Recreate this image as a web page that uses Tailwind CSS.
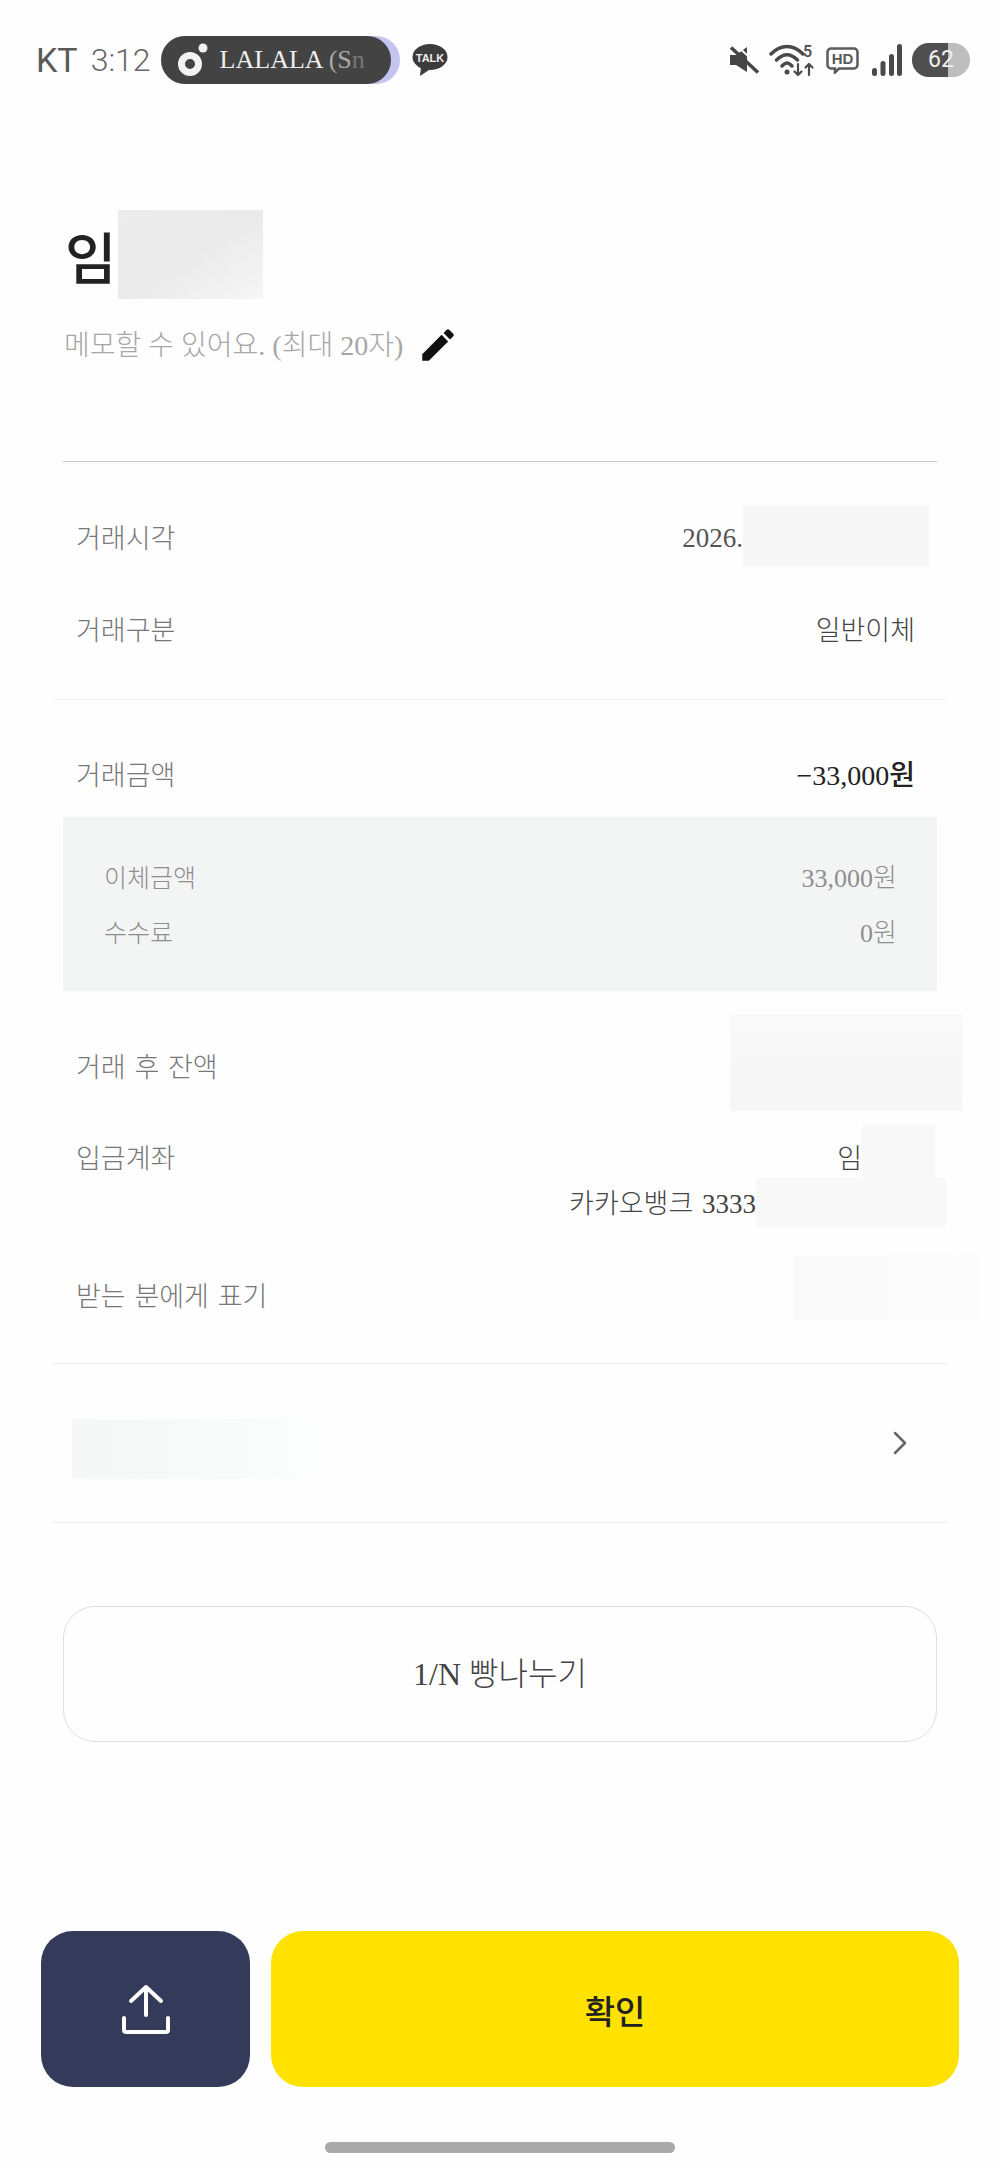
<!doctype html>
<html lang="ko">
<head>
<meta charset="utf-8">
<script src="https://cdn.jsdelivr.net/npm/@tailwindcss/browser@4"></script>
</head>
<body class="m-0">
<div class="relative w-[1000px] h-[2168px] overflow-hidden bg-[#fefefe] font-['Liberation_Serif','Noto_Sans_CJK_KR',serif] font-light text-[#555]">

  <!-- status bar -->
  <div class="h-[120px] flex items-center justify-between pl-[36px] pr-[30px]">
    <div class="flex items-center">
      <span class="font-['Roboto',sans-serif] font-normal text-[34px] leading-none text-[#5a5a5a]">KT</span>
      <span class="ml-[13px] font-['Roboto',sans-serif] font-light text-[32px] leading-none text-[#666]">3:12</span>
      <div class="relative ml-[10px] w-[239px] h-[48px]">
        <div class="absolute inset-0 rounded-full bg-[#c5c3ef]"></div>
        <div class="absolute left-0 top-0 bottom-0 w-[230px] rounded-full bg-[#434343] flex items-center pl-[17px]">
          <svg width="34" height="36" viewBox="0 0 34 36"><circle cx="12" cy="22" r="8.500" fill="none" stroke="#f2f2f2" stroke-width="7"/><circle cx="25" cy="6" r="4.500" fill="#f2f2f2"/></svg>
          <span class="ml-[8px] text-[26px] leading-none text-[#eee] whitespace-nowrap">LALALA <span class="text-[#aaa]">(S</span><span class="text-[#777]">n</span></span>
        </div>
      </div>
      <svg class="ml-[12px]" width="36" height="32" viewBox="0 0 36 32"><ellipse cx="18" cy="13" rx="17.500" ry="13" fill="#3c3c3c"/><path d="M9 23l-1 9 9-6z" fill="#3c3c3c"/><text x="18" y="17.500" font-family="Liberation Sans" font-size="11" font-weight="700" text-anchor="middle" fill="#eee">TALK</text></svg>
    </div>
    <div class="flex items-center">
      <svg width="31" height="28" viewBox="0 0 31 28"><path d="M1 9h6l11-8v25l-11-7H1z" fill="#454545"/><path d="M2 1.500l27 25" stroke="#454545" stroke-width="3.500"/><path d="M7 1l25 23" stroke="#fefefe" stroke-width="2" transform="translate(-1 -3)"/></svg>
      <svg class="ml-[9px]" width="46" height="34" viewBox="0 0 46 34" fill="none" stroke="#4a4a4a" stroke-width="3.500" stroke-linecap="round"><path d="M2 11c10-10 22-10 32 0"/><path d="M7.500 17c7-7 14-7 21 0"/><path d="M13 23c4-4 6-4 10 0"/><circle cx="18" cy="29" r="2.500" fill="#4a4a4a" stroke="none"/><path d="M29 21v11m-3.500-3.500l3.500 3.500 3.500-3.500M40 32V21m-3.500 3.500l3.500-3.500 3.500 3.500" stroke-width="2.200"/><text x="34" y="14" font-family="Roboto" font-size="16" fill="#4a4a4a" stroke="none" font-weight="500">5</text></svg>
      <svg class="ml-[11px]" width="33" height="27" viewBox="0 0 33 27" fill="none" stroke="#5a5a5a" stroke-width="2.500"><path d="M5 1.500h23a3.500 3.500 0 0 1 3.500 3.500v13a3.500 3.500 0 0 1-3.500 3.500H13l-4 4v-4H5a3.500 3.500 0 0 1-3.500-3.500V5A3.500 3.500 0 0 1 5 1.500z"/><text x="16.500" y="17" font-family="Liberation Sans" font-size="15" font-weight="700" text-anchor="middle" fill="#5a5a5a" stroke="none">HD</text></svg>
      <svg class="ml-[13px]" width="30" height="32" viewBox="0 0 30 32" fill="#4a4a4a"><rect x="0" y="24" width="5" height="8" rx="2.500"/><rect x="8.500" y="17" width="5" height="15" rx="2.500"/><rect x="17" y="10" width="5" height="22" rx="2.500"/><rect x="25" y="0" width="5" height="32" rx="2.500"/></svg>
      <div class="ml-[10px] w-[58px] h-[34px] rounded-full overflow-hidden relative bg-[#bdbdbd] flex items-center">
        <div class="w-[36px] h-full bg-[#505050]"></div>
        <span class="absolute left-[16px] top-0 bottom-0 flex items-center font-['Roboto',sans-serif] font-normal text-[23px] text-[#f0f0f0]">62</span>
      </div>
    </div>
  </div>

  <!-- title -->
  <div class="mt-[90px] ml-[65px] flex items-center h-[89px]">
    <span class="font-['Noto_Sans_CJK_KR',sans-serif] font-medium text-[56px] leading-none text-[#222]">임</span>
    <div class="ml-[1px] w-[145px] h-[89px] bg-gradient-to-br from-[#ececec] via-[#eaeaea] to-[#f6f6f6]"></div>
  </div>
  <div class="mt-[26px] ml-[64px] flex items-center h-[40px]">
    <span class="mt-[2px] text-[28px] leading-none text-[#a6a6a6]">메모할 수 있어요. (최대 20자)</span>
    <svg class="ml-[14px]" width="42" height="42" viewBox="0 0 24 24" fill="#111"><path d="M3 17.250V21h3.750L17.810 9.940l-3.750-3.750L3 17.250zM20.710 7.040c.39-.39.39-1.020 0-1.410l-2.340-2.340c-.39-.39-1.020-.39-1.410 0l-1.830 1.830 3.750 3.750 1.830-1.830z"/></svg>
  </div>

  <div class="mt-[96px] mx-[63px] h-[1px] bg-[#c8c8c8]"></div>

  <!-- rows -->
  <div class="mt-[28px] pl-[76px] pr-[85px] flex flex-col text-[27px]">
    <div class="h-[92px] flex items-center justify-between relative">
      <span class="mt-[6px] text-[#777]">거래시각</span>
      <div class="flex items-center">
        <span class="mt-[4px] text-[#555]">2026.</span>
        <div class="w-[186px] h-[62px] -mr-[14px] bg-[#f7f7f7]"></div>
      </div>
    </div>
    <div class="h-[92px] flex items-center justify-between">
      <span class="mt-[6px] text-[#777]">거래구분</span>
      <span class="mt-[6px] text-[#444]">일반이체</span>
    </div>
  </div>

  <div class="mt-[25px] mx-[52px] h-[1px] bg-[#f2f2f2]"></div>

  <div class="mt-[31px] h-[86px] pl-[76px] pr-[85px] flex items-center justify-between">
    <span class="mt-[4px] text-[27px] text-[#777]">거래금액</span>
    <span class="mt-[4px] text-[28px] font-medium text-[#222]">−33,000원</span>
  </div>

  <div class="mx-[63px] h-[174px] pt-[34px] pl-[41px] pr-[40px] bg-[#f3f5f5] text-[25px] text-[#8e8e8e]">
    <div class="h-[55px] flex items-center justify-between"><span>이체금액</span><span class="text-[26px]">33,000원</span></div>
    <div class="h-[55px] flex items-center justify-between"><span>수수료</span><span class="text-[26px]">0원</span></div>
  </div>

  <div class="pl-[76px] pr-[85px] text-[27px] [word-spacing:2px]">
    <div class="mt-[23px] h-[100px] flex items-center justify-between relative">
      <span class="mt-[8px] text-[#777]">거래 후 잔액</span>
      <div class="absolute right-[-47px] top-0 w-[232px] h-[97px] bg-gradient-to-b from-[#f9f9f9] to-[#f6f6f6]"></div>
    </div>
    <div class="mt-[20px]">
      <div class="flex justify-between h-[44px] items-center">
        <span class="mt-[6px] text-[#777]">입금계좌</span>
        <div class="flex items-center">
          <span class="mt-[6px] text-[#444]">임</span>
          <div class="w-[73px] h-[54px] -mr-[20px] mt-[-8px] bg-[#f8f8f8]"></div>
        </div>
      </div>
      <div class="flex justify-end items-center h-[48px]">
        <span class="mt-[4px] text-[#444]">카카오뱅크 3333</span>
        <div class="w-[190px] h-[49px] -mr-[31px] bg-[#f8f8f8]"></div>
      </div>
    </div>
    <div class="mt-[36px] h-[64px] flex items-center justify-between relative">
      <span class="mt-[6px] text-[#777]">받는 분에게 표기</span>
      <div class="absolute right-[-65px] top-[-7px] w-[186px] h-[65px] bg-gradient-to-r from-[#f9f9f9] to-[#fcfcfc]"></div>
    </div>
  </div>

  <div class="mt-[37px] mx-[52px] h-[1px] bg-[#f0f0f0]"></div>

  <div class="h-[158px] pl-[72px] pr-[93px] flex items-center justify-between">
    <div class="w-[280px] h-[60px] mt-[12px] bg-gradient-to-r from-[#f6f8f8] via-[#f8fafa] to-[#fefefe]"></div>
    <svg width="14" height="24" viewBox="0 0 14 24" fill="none" stroke="#666" stroke-width="2.500" stroke-linecap="round" stroke-linejoin="round"><path d="M2 2l10 10L2 22"/></svg>
  </div>

  <div class="mx-[52px] h-[1px] bg-[#f0f0f0]"></div>

  <div class="mt-[83px] mx-[63px] h-[136px] rounded-[32px] border border-[#dcdfdf] flex items-center justify-center text-[32px] text-[#444]">1/N 빵나누기</div>

  <!-- bottom buttons -->
  <div class="mt-[189px] mx-[41px] flex gap-[21px] h-[156px]">
    <div class="w-[209px] rounded-[32px] bg-[#343a59] flex items-center justify-center">
      <svg width="48" height="50" viewBox="0 0 48 50" fill="none" stroke="#fff" stroke-width="4" stroke-linecap="round" stroke-linejoin="round"><path d="M24 3v28M9 17L24 3l15 14"/><path d="M2 34v12a2 2 0 0 0 2 2h40a2 2 0 0 0 2-2V34"/></svg>
    </div>
    <div class="flex-1 rounded-[32px] bg-[#ffe200] flex items-center justify-center font-['Noto_Sans_CJK_KR',sans-serif] font-medium text-[33px] text-[#222]"><span class="mt-[4px]">확인</span></div>
  </div>

  <div class="mt-[55px] mx-auto w-[350px] h-[11px] rounded-full bg-[#aaaaaa]"></div>
</div>
</body>
</html>
